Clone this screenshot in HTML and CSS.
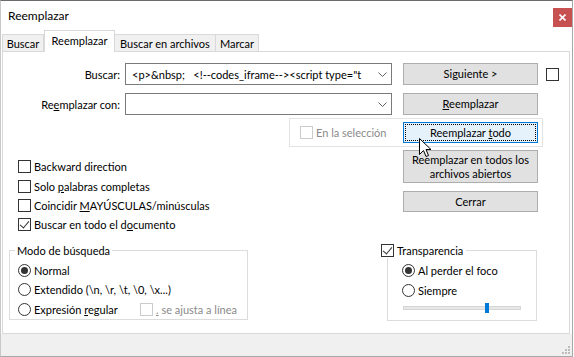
FILE: index.html
```html
<!DOCTYPE html>
<html lang="es">
<head>
    <meta charset="UTF-8">
    <title>Reemplazar</title>
    <link rel="stylesheet" href="styles.css">
</head>
<body>
    <div class="window">
        <div class="titlebar">
            <span class="title">Reemplazar</span>
            <span class="close-btn">
                <svg width="7" height="7" viewBox="0 0 7 7"><path d="M0.5 0.5 L6.5 6.5 M6.5 0.5 L0.5 6.5" stroke="#fff" stroke-width="1.6"/></svg>
            </span>
        </div>

        <div class="tabs">
            <div class="tab tab-1">Buscar</div>
            <div class="tab tab-2 active">Reemplazar</div>
            <div class="tab tab-3">Buscar en archivos</div>
            <div class="tab tab-4">Marcar</div>
        </div>

        <div class="panel">
            <!-- search / replace fields -->
            <div class="field-grid">
                <span class="field-label">Buscar:</span>
                <div class="combo">
                    <span class="combo-text">&lt;p&gt;&amp;nbsp;&nbsp;&nbsp; &lt;!--codes_iframe--&gt;&lt;script type="t</span>
                    <svg class="chevron" width="9" height="5" viewBox="0 0 9 5"><path d="M0.5 0.5 L4.5 4.5 L8.5 0.5" fill="none" stroke="#606060"/></svg>
                </div>
                <button class="btn">Siguiente &gt;</button>
                <span class="check"></span>

                <span class="field-label">Re<u>e</u>mplazar con:</span>
                <div class="combo">
                    <span class="combo-text"></span>
                    <svg class="chevron" width="9" height="5" viewBox="0 0 9 5"><path d="M0.5 0.5 L4.5 4.5 L8.5 0.5" fill="none" stroke="#606060"/></svg>
                </div>
                <button class="btn"><span><u>R</u>eemplazar</span></button>
                <span></span>
            </div>

            <div class="sel-group">
                <div class="opt disabled"><span class="check"></span><span>En la selección</span></div>
                <button class="btn btn-focus"><span class="focus-ring"><span>Reemplazar <u>t</u>odo</span></span></button>
            </div>

            <div class="lower">
                <div class="left-col">
                    <div class="options">
                        <div class="opt"><span class="check"></span><span>Backward direction</span></div>
                        <div class="opt"><span class="check"></span><span>Solo <u>p</u>alabras completas</span></div>
                        <div class="opt"><span class="check"></span><span>Coincidir <u>M</u>AYÚSCULAS/minúsculas</span></div>
                        <div class="opt"><span class="check checked"></span><span>Buscar en todo el d<u>o</u>cumento</span></div>
                    </div>

                    <fieldset class="group mode-group">
                        <legend>Modo de búsqueda</legend>
                        <div class="group-body">
                            <div class="opt"><span class="radio checked"></span><span>Normal</span></div>
                            <div class="opt"><span class="radio"></span><span>Extendido (\n, \r, \t, \0, \x...)</span></div>
                            <div class="opt">
                                <span class="opt regex-opt"><span class="radio"></span><span>Expresión <u>r</u>egular</span></span>
                                <span class="opt disabled"><span class="check"></span><span><u>.</u> se ajusta a línea</span></span>
                            </div>
                        </div>
                    </fieldset>
                </div>

                <div class="right-col">
                    <button class="btn btn-tall">Reemplazar en todos los<br>archivos abiertos</button>
                    <button class="btn btn-close">Cerrar</button>

                    <fieldset class="group transp-group">
                        <legend class="opt"><span class="check checked"></span><span>Transparencia</span></legend>
                        <div class="group-body">
                            <div class="opt"><span class="radio checked"></span><span>Al perder el foco</span></div>
                            <div class="opt"><span class="radio"></span><span>Siempre</span></div>
                            <div class="slider">
                                <div class="slider-track"></div>
                                <div class="slider-thumb"></div>
                            </div>
                        </div>
                    </fieldset>
                </div>
            </div>
        </div>

        <div class="statusbar">
            <svg class="grip" width="9" height="9" viewBox="0 0 9 9" fill="#bcbcbc">
                <rect x="6" y="0" width="2" height="2"/>
                <rect x="3" y="3" width="2" height="2"/><rect x="6" y="3" width="2" height="2"/>
                <rect x="0" y="6" width="2" height="2"/><rect x="3" y="6" width="2" height="2"/><rect x="6" y="6" width="2" height="2"/>
            </svg>
        </div>

        <svg class="cursor" width="13" height="20" viewBox="0 0 13 20">
            <path d="M0.5 0.5 L0.5 16.5 L4.5 12.5 L7 18.5 L9.5 17.5 L7 11.5 L12 11.5 Z" fill="#fff" stroke="#000" stroke-linejoin="miter"/>
        </svg>
    </div>
</body>
</html>
```
FILE: styles.css
```css
* {
    margin: 0;
    padding: 0;
    box-sizing: border-box;
}

body {
    width: 574px;
    height: 357px;
    background: #ffffff;
    font-family: Lato, "Liberation Sans", sans-serif;
    font-size: 11px;
    color: #000000;
    overflow: hidden;
}

u {
    text-decoration: underline;
    text-underline-offset: 1px;
}

.window {
    position: relative;
    width: 573px;
    height: 357px;
    background: #ffffff;
    border-top: 1px solid #6b6b6b;
    border-left: 1px solid #c8c8c8;
    border-right: 1px solid #a8a8a8;
    border-bottom: 1px solid #a8a8a8;
    display: flex;
    flex-direction: column;
}

/* title bar */
.titlebar {
    height: 30px;
    display: flex;
    align-items: flex-start;
    justify-content: space-between;
}

.title {
    font-size: 12px;
    margin: 7px 0 0 7px;
}

.close-btn {
    width: 19px;
    height: 19px;
    margin-top: 7px;
    background: #c75050;
    display: flex;
    align-items: center;
    justify-content: center;
}

/* tabs */
.tabs {
    height: 20px;
    display: flex;
    align-items: flex-end;
    padding-left: 1px;
    position: relative;
    z-index: 1;
}

.tab {
    height: 17px;
    background: #f0f0f0;
    border: 1px solid #d9d9d9;
    border-bottom: none;
    display: flex;
    align-items: center;
    justify-content: center;
    padding-top: 1px;
}

.tab + .tab {
    border-left: none;
}

.tab-1 { width: 42px; }
.tab-2 { width: 71px; }
.tab-3 { width: 101px; }
.tab-4 { width: 43px; }

.tab.active {
    height: 22px;
    margin-bottom: -1px;
    background: #ffffff;
    border-left: 1px solid #d9d9d9;
    padding-top: 0;
    padding-bottom: 3px;
}

/* panel */
.panel {
    margin-left: 1px;
    width: 568px;
    height: 283px;
    border: 1px solid #d9d9d9;
    background: #ffffff;
}

.field-grid {
    display: grid;
    grid-template-columns: 117px 267px 135px 13px;
    grid-auto-rows: 22px;
    column-gap: 5px;
    row-gap: 8px;
    padding-top: 11px;
    align-items: center;
}

.field-grid .btn {
    margin-left: 6px;
}

.field-grid .check {
    margin-left: 9px;
}

.field-label {
    text-align: right;
}

.combo {
    height: 22px;
    border: 1px solid #7a7a7a;
    display: flex;
    align-items: center;
    padding: 0 4px 0 6px;
}

.combo-text {
    flex: 1;
    white-space: pre;
    overflow: hidden;
}

.chevron {
    margin-left: 3px;
}

/* buttons */
.btn {
    font: inherit;
    color: #000000;
    width: 135px;
    height: 22px;
    background: #e1e1e1;
    border: 1px solid #adadad;
    display: flex;
    align-items: center;
    justify-content: center;
    text-align: center;
    line-height: 14px;
}

.btn-focus {
    height: 21px;
    background: #e5f1fb;
    border-color: #0078d7;
    padding: 1px;
}

.focus-ring {
    width: 100%;
    height: 100%;
    border: 1px dotted #000000;
    display: flex;
    align-items: center;
    justify-content: center;
}

.btn-tall {
    height: 33px;
    margin-top: 3px;
}

.btn-close {
    margin-top: 8px;
    height: 21px;
}

/* check boxes and radios */
.check,
.radio {
    flex: none;
    width: 13px;
    height: 13px;
    border: 1px solid #333333;
    background: #ffffff;
    margin-right: 3px;
    position: relative;
}

.radio {
    border-radius: 50%;
}

.radio.checked::after {
    content: "";
    position: absolute;
    left: 2px;
    top: 2px;
    width: 7px;
    height: 7px;
    border-radius: 50%;
    background: #333333;
}

.check.checked::after {
    content: "";
    position: absolute;
    left: 3px;
    top: 0px;
    width: 4px;
    height: 8px;
    border-right: 1px solid #333333;
    border-bottom: 1px solid #333333;
    transform: rotate(40deg);
}

.opt {
    display: flex;
    align-items: center;
    white-space: nowrap;
}

.disabled {
    color: #8a8a8a;
}

.disabled .check {
    border-color: #cccccc;
}

/* "En la seleccion" group */
.sel-group {
    margin: 3px 0 0 286px;
    width: 254px;
    height: 29px;
    border: 1px solid #e3e3e3;
    display: flex;
    align-items: center;
    padding-left: 10px;
}

.sel-group .opt {
    width: 103px;
}

/* lower area */
.lower {
    display: flex;
}

.left-col {
    width: 378px;
}

.options {
    padding: 10px 0 0 15px;
}

.options .opt {
    height: 19.4px;
}

.group {
    border: 1px solid #dcdcdc;
    min-width: 0;
    padding: 0;
}

.group legend {
    padding: 0 2px;
    height: 15px;
    line-height: 15px;
}

.mode-group {
    margin: 8px 0 0 6px;
    width: 239px;
}

.mode-group legend {
    margin-left: 5px;
}

.mode-group .group-body {
    padding: 3px 0 0 8px;
}

.mode-group .group-body > .opt {
    height: 19.5px;
}

.regex-opt {
    width: 122px;
}

.right-col .btn {
    margin-left: 22px;
}

.transp-group {
    margin: 31px 0 0 6px;
    width: 150px;
    height: 78px;
}

.transp-group legend {
    margin-left: -7px;
    padding: 0 3px 0 0;
    display: flex;
}

.transp-group .group-body {
    padding: 3px 0 0 14px;
}

.transp-group .group-body > .opt {
    height: 19.5px;
}

.slider {
    position: relative;
    width: 118px;
    height: 11px;
    margin: 3px 0 0 1px;
}

.slider-track {
    position: absolute;
    left: 0;
    top: 3px;
    width: 118px;
    height: 4px;
    background: #e7e7e7;
    border: 1px solid #d6d6d6;
}

.slider-thumb {
    position: absolute;
    left: 82px;
    top: 0;
    width: 4px;
    height: 10px;
    background: #007ad9;
}

/* status bar */
.statusbar {
    height: 22px;
    background: #f0f0f0;
    display: flex;
    justify-content: flex-end;
    align-items: flex-end;
    padding: 0 1px 1px 0;
}

/* mouse pointer over the focused button */
.cursor {
    position: absolute;
    left: 418px;
    top: 137px;
}
```
